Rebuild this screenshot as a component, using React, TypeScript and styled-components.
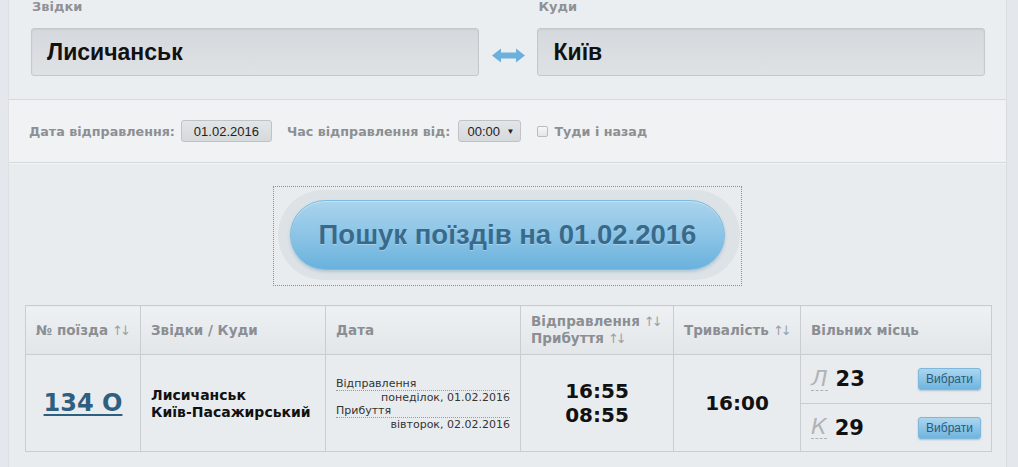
import React from "react";
import styled, { createGlobalStyle } from "styled-components";

const GlobalStyle = createGlobalStyle`
  html, body {
    margin: 0;
    padding: 0;
    background: #e4e7eb;
  }
  body {
    font-family: "DejaVu Sans", Verdana, sans-serif;
  }
`;

const Page = styled.div`
  width: 1018px;
  height: 467px;
  overflow: hidden;
  background: #e4e7eb;
`;

const Column = styled.div`
  margin-left: 8px;
  width: 999px;
  min-height: 467px;
  box-sizing: border-box;
  border-left: 1px solid #dde0e4;
  border-right: 1px solid #d8dbdf;
  background: #e9ecef;
`;

const FormTop = styled.div`
  background: #ebeef1;
  padding: 0 21px 23px 22px;
  border-bottom: 1px solid #d7dadd;
  box-shadow: 0 1px 0 #f7f8f9;
`;

const FieldsRow = styled.div`
  display: flex;
  align-items: flex-end;
`;

const Field = styled.div`
  width: 448px;
  display: flex;
  flex-direction: column;
`;

const FieldLabel = styled.div`
  font-size: 13px;
  font-weight: bold;
  color: #8e9195;
  line-height: 13px;
  margin-bottom: 15px;
  padding-left: 1px;
`;

const CityInput = styled.div`
  height: 48px;
  box-sizing: border-box;
  border: 1px solid #c5c8cb;
  border-radius: 3px;
  background: linear-gradient(#d5d8dc, #dfe2e5);
  box-shadow: inset 0 1px 2px rgba(0, 0, 0, 0.06);
  padding-left: 15px;
  display: flex;
  align-items: center;
  font-family: "Liberation Sans", Arial, sans-serif;
  font-weight: bold;
  font-size: 23px;
  color: #111;
`;

const Swap = styled.div`
  width: 59px;
  height: 48px;
  display: flex;
  align-items: center;
  justify-content: center;
  padding-top: 6px;
  box-sizing: border-box;
`;

const OptionsRow = styled.div`
  height: 62px;
  background: #f0f2f4;
  display: flex;
  align-items: center;
  padding-left: 20px;
  border-bottom: 1px solid #d6d9dc;
  box-shadow: 0 1px 0 #f3f4f6;
`;

const OptLabel = styled.span<{ $gap: number }>`
  font-size: 12.7px;
  font-weight: bold;
  color: #8c8f93;
  margin-right: ${(p) => p.$gap}px;
`;

const SmallBox = styled.div`
  height: 22px;
  box-sizing: border-box;
  border: 1px solid #bfc2c6;
  border-radius: 3px;
  background: linear-gradient(#e3e6e9, #d6d9dc);
  display: flex;
  align-items: center;
  font-family: "Liberation Sans", Arial, sans-serif;
  font-size: 13px;
  color: #222;
`;

const DateBox = styled(SmallBox)`
  width: 91px;
  justify-content: center;
  margin-right: 15px;
`;

const SelectBox = styled(SmallBox)`
  width: 63px;
  justify-content: space-between;
  padding: 0 6px 0 8px;
`;

const Caret = styled.span`
  font-size: 8px;
  color: #222;
`;

const CheckBox = styled.span`
  width: 11px;
  height: 11px;
  box-sizing: border-box;
  border: 1px solid #b9bcc0;
  border-radius: 2px;
  background: linear-gradient(#f6f7f8, #e3e5e8);
  margin: 0 6px 0 16px;
`;

const SearchArea = styled.div`
  display: flex;
  justify-content: center;
  padding-top: 23px;
`;

const Focus = styled.div`
  border: 1px dotted #8a8db0;
  padding: 3px 1px 5px 4px;
`;

const Halo = styled.div`
  padding: 10px 15px 10px 12px;
  border-radius: 50px;
  background: #dce2e6;
`;

const SearchButton = styled.button`
  width: 435px;
  height: 70px;
  border-radius: 35px;
  border: 1px solid #7fbbe0;
  background: linear-gradient(#a9d4ed, #8cc4e6 50%, #69b2dd);
  box-shadow: inset 0 1px 0 rgba(255, 255, 255, 0.35), 0 2px 3px rgba(60, 120, 160, 0.25);
  font-family: "Liberation Sans", Arial, sans-serif;
  font-weight: bold;
  font-size: 27.5px;
  color: #386a8b;
  text-shadow: 0 1px 0 rgba(255, 255, 255, 0.3);
  padding: 0;
  cursor: pointer;
`;

const Table = styled.table`
  margin: 19px 0 0 16px;
  width: 966px;
  border-collapse: collapse;
  table-layout: fixed;
`;

const Th = styled.th<{ $w: number }>`
  width: ${(p) => p.$w}px;
  height: 49px;
  box-sizing: border-box;
  border: 1px solid #c9cdd1;
  background: linear-gradient(#eef1f3, #e2e6e9);
  padding: 0 10px;
  text-align: left;
  font-size: 13.5px;
  font-weight: bold;
  color: #8b8f93;
  line-height: 17px;
  white-space: nowrap;
`;

const Sort = styled.span`
  font-weight: normal;
  color: #9aa0a6;
  font-size: 13px;
  letter-spacing: -3px;
  margin-left: 4px;
`;

const Td = styled.td<{ $align?: string }>`
  height: 97px;
  box-sizing: border-box;
  border: 1px solid #c9cdd1;
  padding: 0 10px;
  text-align: ${(p) => p.$align || "left"};
  vertical-align: middle;
`;

const SeatTd = styled(Td)`
  padding: 0;
`;

const TrainLink = styled.a`
  font-size: 24px;
  font-weight: bold;
  color: #2f5f7f;
  text-decoration: underline;
  text-underline-offset: 3px;
`;

const Route = styled.div`
  font-size: 14px;
  font-weight: bold;
  color: #111;
  line-height: 17px;
  padding-top: 2px;
`;

const DateBlock = styled.div`
  font-size: 11px;
  color: #333;
  line-height: 13px;
  padding-top: 2px;
`;

const DateLabel = styled.div`
  border-bottom: 1px dotted #9a9a9a;
`;

const DateValue = styled.div`
  text-align: right;
`;

const BigTime = styled.div`
  font-size: 20px;
  font-weight: bold;
  color: #111;
  line-height: 24px;
`;

const SeatRow = styled.div<{ $top?: boolean }>`
  height: 48px;
  box-sizing: border-box;
  display: flex;
  align-items: center;
  padding: 0 10px;
  border-top: ${(p) => (p.$top ? "1px solid #c9cdd1" : "none")};
`;

const SeatType = styled.span`
  font-family: "DejaVu Sans", sans-serif;
  font-style: italic;
  font-size: 22px;
  color: #b0b3b7;
  border-bottom: 1px dashed #b0b3b7;
  line-height: 22px;
  margin-right: 8px;
`;

const SeatCount = styled.span`
  font-size: 21px;
  font-weight: bold;
  color: #111;
  flex: 1;
`;

const PickButton = styled.button`
  width: 63px;
  height: 22px;
  border: 1px solid #7eb8dc;
  border-radius: 3px;
  background: linear-gradient(#abd6ef, #6fb4df);
  box-shadow: 0 1px 2px rgba(60, 110, 150, 0.35);
  font-family: "Liberation Sans", Arial, sans-serif;
  font-size: 12px;
  color: #2b5a7b;
  padding: 0;
  cursor: pointer;
`;

const SwapIcon = () => (
  <svg width="33" height="15" viewBox="0 0 33 15">
    <path
      d="M0 7.5 L9 0.5 L9 4.5 L24 4.5 L24 0.5 L33 7.5 L24 14.5 L24 10.5 L9 10.5 L9 14.5 Z"
      fill="#6cb1dc"
    />
  </svg>
);

const seats = [
  { type: "Л", count: 23 },
  { type: "К", count: 29 },
];

export default function App() {
  return (
    <Page>
      <GlobalStyle />
      <Column>
        <FormTop>
          <FieldsRow>
            <Field>
              <FieldLabel>Звідки</FieldLabel>
              <CityInput>Лисичанськ</CityInput>
            </Field>
            <Swap>
              <SwapIcon />
            </Swap>
            <Field>
              <FieldLabel>Куди</FieldLabel>
              <CityInput>Київ</CityInput>
            </Field>
          </FieldsRow>
        </FormTop>
        <OptionsRow>
          <OptLabel $gap={6}>Дата відправлення:</OptLabel>
          <DateBox>01.02.2016</DateBox>
          <OptLabel $gap={8}>Час відправлення від:</OptLabel>
          <SelectBox>
            00:00 <Caret>▼</Caret>
          </SelectBox>
          <CheckBox />
          <OptLabel $gap={0}>Туди і назад</OptLabel>
        </OptionsRow>
        <SearchArea>
          <Focus>
            <Halo>
              <SearchButton>Пошук поїздів на 01.02.2016</SearchButton>
            </Halo>
          </Focus>
        </SearchArea>
        <Table>
          <thead>
            <tr>
              <Th $w={115}>
                № поїзда<Sort>↑↓</Sort>
              </Th>
              <Th $w={185}>Звідки / Куди</Th>
              <Th $w={195}>Дата</Th>
              <Th $w={153}>
                Відправлення<Sort>↑↓</Sort>
                <br />
                Прибуття<Sort>↑↓</Sort>
              </Th>
              <Th $w={127}>
                Тривалість<Sort>↑↓</Sort>
              </Th>
              <Th $w={191}>Вільних місць</Th>
            </tr>
          </thead>
          <tbody>
            <tr>
              <Td $align="center">
                <TrainLink href="#">134 О</TrainLink>
              </Td>
              <Td>
                <Route>
                  Лисичанськ
                  <br />
                  Київ-Пасажирський
                </Route>
              </Td>
              <Td>
                <DateBlock>
                  <DateLabel>Відправлення</DateLabel>
                  <DateValue>понеділок, 01.02.2016</DateValue>
                  <DateLabel>Прибуття</DateLabel>
                  <DateValue>вівторок, 02.02.2016</DateValue>
                </DateBlock>
              </Td>
              <Td $align="center">
                <BigTime>16:55</BigTime>
                <BigTime>08:55</BigTime>
              </Td>
              <Td $align="center">
                <BigTime>16:00</BigTime>
              </Td>
              <SeatTd>
                {seats.map((s, i) => (
                  <SeatRow key={s.type} $top={i > 0}>
                    <SeatType>{s.type}</SeatType>
                    <SeatCount>{s.count}</SeatCount>
                    <PickButton>Вибрати</PickButton>
                  </SeatRow>
                ))}
              </SeatTd>
            </tr>
          </tbody>
        </Table>
      </Column>
    </Page>
  );
}
